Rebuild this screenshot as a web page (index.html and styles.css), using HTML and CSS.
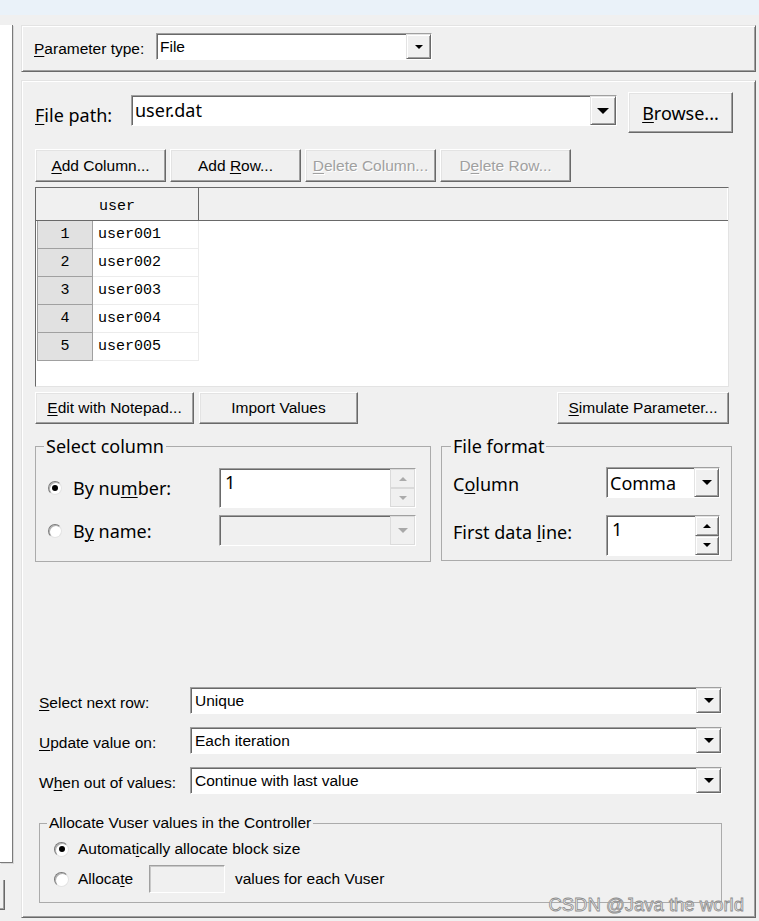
FILE: index.html
```html
<!DOCTYPE html>
<html lang="en">
<head>
<meta charset="utf-8">
<title>Parameter Properties</title>
<link rel="stylesheet" href="styles.css">
</head>
<body>
<div class="titlebar"></div>
<div class="window">
  <aside class="side">
    <div class="tree"></div>
    <div class="side-btn"></div>
  </aside>
  <main class="main">
    <section class="panel top-panel">
      <span class="lbl-type"><u>P</u>arameter type:</span>
      <div class="combo c-type"><span class="val"><span>File</span></span><span class="drop"><i class="tri"></i></span></div>
    </section>

    <section class="panel body-panel">
      <div class="path-row">
        <span class="big lbl-path"><u>F</u>ile path:</span>
        <div class="combo c-path big"><span class="val"><span>user.dat</span></span><span class="drop d-path"><i class="tri t-lg"></i></span></div>
        <button class="btn big browse"><span><u>B</u>rowse...</span></button>
      </div>

      <div class="btn-row">
        <button class="btn b-grid"><span><u>A</u>dd Column...</span></button>
        <button class="btn b-grid"><span>Add <u>R</u>ow...</span></button>
        <button class="btn b-grid dis"><span><u>D</u>elete Column...</span></button>
        <button class="btn b-grid dis"><span>D<u>e</u>lete Row...</span></button>
      </div>

      <div class="grid">
        <div class="ghead"><div class="hcell">user</div><div class="gfill"></div></div>
        <div class="grow"><div class="num">1</div><div class="cell">user001</div></div>
        <div class="grow"><div class="num">2</div><div class="cell">user002</div></div>
        <div class="grow"><div class="num">3</div><div class="cell">user003</div></div>
        <div class="grow"><div class="num">4</div><div class="cell">user004</div></div>
        <div class="grow"><div class="num">5</div><div class="cell">user005</div></div>
      </div>

      <div class="btn-row2">
        <button class="btn b-edit"><span><u>E</u>dit with Notepad...</span></button>
        <button class="btn b-import"><span>Import Values</span></button>
        <button class="btn b-sim"><span><u>S</u>imulate Parameter...</span></button>
      </div>

      <div class="groups big">
        <div class="group g-sel">
          <div class="legend">Select column</div>
          <div class="srow sr1">
            <span class="radio on"></span>
            <span class="rlabel">By nu<u>m</u>ber:</span>
            <div class="spin spin-num">
              <span class="val">1</span>
              <span class="sbtns"><span class="sbtn flat"><i class="up gray"></i></span><span class="sbtn flat"><i class="dn gray"></i></span></span>
            </div>
          </div>
          <div class="srow sr2">
            <span class="radio"></span>
            <span class="rlabel">B<u>y</u> name:</span>
            <div class="combo c-name"><span class="val"></span><span class="drop flat"><i class="tri gray"></i></span></div>
          </div>
        </div>

        <div class="group g-fmt">
          <div class="legend">File format</div>
          <div class="frow fr1">
            <span class="flabel">C<u>o</u>lumn</span>
            <div class="combo c-comma"><span class="val"><span>Comma</span></span><span class="drop"><i class="tri t-md"></i></span></div>
          </div>
          <div class="frow fr2">
            <span class="flabel">First data <u>l</u>ine:</span>
            <div class="spin spin-line">
              <span class="val">1</span>
              <span class="sbtns"><span class="sbtn"><i class="up"></i></span><span class="sbtn"><i class="dn"></i></span></span>
            </div>
          </div>
        </div>
      </div>

      <div class="lrow lr1">
        <span class="llabel"><u>S</u>elect next row:</span>
        <div class="combo c-low"><span class="val"><span>Unique</span></span><span class="drop"><i class="tri t-md"></i></span></div>
      </div>
      <div class="lrow">
        <span class="llabel"><u>U</u>pdate value on:</span>
        <div class="combo c-low"><span class="val"><span>Each iteration</span></span><span class="drop"><i class="tri t-md"></i></span></div>
      </div>
      <div class="lrow">
        <span class="llabel">W<u>h</u>en out of values:</span>
        <div class="combo c-low"><span class="val"><span>Continue with last value</span></span><span class="drop"><i class="tri t-md"></i></span></div>
      </div>

      <div class="group g-alloc">
        <div class="legend legend-s">Allocate Vuser values in the Controller</div>
        <div class="arow ar1">
          <span class="radio on"></span>
          <span class="alabel">Automat<u>i</u>cally allocate block size</span>
        </div>
        <div class="arow ar2">
          <span class="radio"></span>
          <span class="alabel alloc-lbl">Alloca<u>t</u>e</span>
          <span class="alloc-in"></span>
          <span class="after">values for each Vuser</span>
        </div>
      </div>

      <div class="wm">CSDN @Java the world</div>
    </section>
  </main>
</div>
</body>
</html>
```

FILE: styles.css
```css
* { box-sizing: border-box; }
html, body { margin: 0; padding: 0; }
body {
  width: 759px;
  height: 921px;
  overflow: hidden;
  background: #f0f0f0;
  font-family: "Liberation Sans", Arial, sans-serif;
  font-size: 15.5px;
  color: #000;
}
.big { font-family: "Noto Sans", "Liberation Sans", sans-serif; font-size: 18px; }
u { text-decoration: underline; text-underline-offset: 2px; text-decoration-thickness: 1px; }

.titlebar { height: 15px; background: #eaf2f9; }
.window { display: flex; padding-top: 10px; }

.side { width: 13px; display: flex; flex-direction: column; }
.tree {
  height: 838px;
  background: #fff;
  border-right: 1px solid #7a7a7a;
  border-bottom: 1px solid #7a7a7a;
  box-shadow: 1px 1px 0 #d8d8d8;
}
.side-btn {
  margin-top: 17px;
  width: 5px;
  height: 30px;
  border-right: 1px solid #696969;
  border-bottom: 1px solid #696969;
  box-shadow: inset -1px -1px #a0a0a0;
}

.main { margin-left: 8px; width: 735px; display: flex; flex-direction: column; gap: 8px; }
.panel {
  border: 1px solid;
  border-color: #e3e3e3 #696969 #696969 #e3e3e3;
  box-shadow: inset 1px 1px #fff, inset -1px -1px #a0a0a0;
}
.top-panel { height: 47px; display: flex; align-items: flex-start; padding: 7px 0 0 12px; }
.lbl-type { width: 122px; line-height: 28px; padding-top: 2px; }

.body-panel {
  position: relative;
  height: 838px;
  padding: 11px 0 0 13px;
  display: flex;
  flex-direction: column;
  align-items: flex-start;
}

/* combo boxes */
.combo {
  display: flex;
  align-items: stretch;
  background: #fff;
  border: 1px solid;
  border-color: #a0a0a0 #fff #fff #a0a0a0;
  box-shadow: inset 1px 1px #696969;
}
.combo .val { flex: 1; display: flex; align-items: center; white-space: nowrap; overflow: hidden; padding-left: 3px; }
.drop {
  width: 25px;
  flex: none;
  display: flex;
  align-items: center;
  justify-content: center;
  background: #f0f0f0;
  border: 1px solid;
  border-color: #e3e3e3 #696969 #696969 #e3e3e3;
  box-shadow: inset 1px 1px #fff, inset -1px -1px #a0a0a0;
}
.drop.flat { border-color: #dcdcdc; box-shadow: none; }
.d-path { width: 26px; }
.tri {
  display: block;
  width: 0;
  height: 0;
  border-left: 4px solid transparent;
  border-right: 4px solid transparent;
  border-top: 4px solid #000;
}
.t-md { border-left-width: 5px; border-right-width: 5px; border-top-width: 5px; }
.t-lg { border-left-width: 6px; border-right-width: 6px; border-top-width: 6px; }
.tri.gray { border-top-color: #a8a8a8; border-left-width: 5px; border-right-width: 5px; border-top-width: 5px; }

.c-type { width: 276px; height: 27px; }
.c-type .val { padding-left: 3px; }
.c-path { width: 486px; height: 31px; margin-top: 3px; }
.c-path .val { padding-bottom: 2px; }
.c-name { width: 197px; height: 31px; background: #f0f0f0; }
.c-comma { width: 114px; height: 31px; }
.c-low { width: 532px; height: 27px; }
.c-low .val { padding-left: 4px; }

/* buttons */
.btn {
  font: inherit;
  color: #000;
  background: #f0f0f0;
  margin: 0;
  padding: 0;
  border: 1px solid;
  border-color: #fff #696969 #696969 #fff;
  box-shadow: inset -1px -1px #a0a0a0, inset 1px 1px #e3e3e3;
  display: flex;
  align-items: center;
  justify-content: center;
  white-space: nowrap;
}
.btn.big { font-family: "Noto Sans", "Liberation Sans", sans-serif; font-size: 18px; }
.btn.dis { color: #a0a0a0; text-shadow: 1px 1px #fff; }

.path-row { display: flex; align-items: flex-start; height: 41px; }
.lbl-path { width: 96px; line-height: 24px; margin-top: 11px; }
.browse { width: 105px; height: 41px; margin-left: 11px; }

.btn-row { display: flex; gap: 4px; margin-top: 16px; }
.b-grid { width: 131px; height: 33px; }

/* grid */
.grid {
  margin-top: 5px;
  width: 694px;
  height: 200px;
  background: #fff;
  border: 1px solid;
  border-color: #696969 #e3e3e3 #e3e3e3 #696969;
  font-family: "Liberation Mono", monospace;
  font-size: 15px;
}
.ghead { display: flex; height: 33px; background: #f0f0f0; border-bottom: 1px solid #696969; }
.hcell { width: 163px; border-right: 1px solid #696969; display: flex; align-items: center; justify-content: center; padding-top: 4px; }
.gfill { flex: 1; border-right: 1px solid #fff; }
.grow { display: flex; height: 28px; margin-left: 1px; }
.num {
  width: 56px;
  background: #e1e1e1;
  border: 1px solid #a0a0a0;
  border-top: 0;
  display: flex;
  align-items: center;
  justify-content: center;
}
.cell {
  width: 106px;
  border-right: 1px solid #ececec;
  border-bottom: 1px solid #ececec;
  padding-left: 5px;
  display: flex;
  align-items: center;
}

.btn-row2 { display: flex; width: 694px; margin-top: 5px; }
.b-edit { width: 159px; height: 32px; }
.b-import { width: 159px; height: 32px; margin-left: 5px; }
.b-sim { width: 172px; height: 32px; margin-left: auto; }

/* group boxes */
.groups { display: flex; gap: 10px; align-items: flex-start; margin-top: 22px; }
.group { border: 1px solid #ababab; }
.legend {
  display: table;
  margin: -11px 0 0 8px;
  padding: 0 2px;
  background: #f0f0f0;
  line-height: 20px;
}
.g-sel { width: 396px; height: 116px; }
.g-fmt { width: 291px; height: 115px; }
.g-fmt .legend { margin-left: 9px; }

.srow { display: flex; align-items: center; padding-left: 12px; }
.sr1 { margin-top: 12px; height: 40px; }
.sr2 { margin-top: 7px; height: 31px; }
.rlabel { margin-left: 11px; width: 146px; }

.radio {
  flex: none;
  width: 14px;
  height: 14px;
  border-radius: 50%;
  background: #fff;
  border: 1px solid;
  border-color: #7a7a7a #e3e3e3 #e3e3e3 #7a7a7a;
  box-shadow: inset 1px 1px #b0b0b0;
  display: flex;
  align-items: center;
  justify-content: center;
}
.radio.on::after { content: ""; width: 6px; height: 6px; border-radius: 50%; background: #000; }

.spin {
  display: flex;
  background: #fff;
  border: 1px solid;
  border-color: #a0a0a0 #fff #fff #a0a0a0;
  box-shadow: inset 1px 1px #696969;
}
.spin .val { flex: 1; padding: 1px 0 0 5px; line-height: 24px; }
.spin-num { width: 197px; height: 40px; }
.spin-line { width: 114px; height: 41px; }
.sbtns { width: 25px; flex: none; display: flex; flex-direction: column; }
.spin-line .sbtns { width: 24px; }
.sbtn {
  flex: 1;
  display: flex;
  align-items: center;
  justify-content: center;
  background: #f0f0f0;
  border: 1px solid;
  border-color: #e3e3e3 #696969 #696969 #e3e3e3;
  box-shadow: inset 1px 1px #fff, inset -1px -1px #a0a0a0;
}
.sbtn.flat { border-color: #dadada; box-shadow: none; }
.up, .dn { display: block; width: 0; height: 0; border-left: 4px solid transparent; border-right: 4px solid transparent; }
.up { border-bottom: 4px solid #000; }
.dn { border-top: 4px solid #000; }
.up.gray { border-bottom-color: #ababab; }
.dn.gray { border-top-color: #ababab; }

.frow { display: flex; align-items: center; padding-left: 11px; }
.fr1 { margin-top: 11px; height: 31px; }
.fr2 { margin-top: 17px; height: 41px; }
.flabel { width: 153px; }
.fr1 .flabel { padding-top: 3px; }
.fr2 .flabel { padding-bottom: 8px; }

/* lower section */
.lrow { display: flex; align-items: center; padding-left: 4px; margin-top: 13px; }
.lr1 { margin-top: 125px; }
.llabel { width: 151px; padding-top: 5px; }

.g-alloc { margin: 29px 0 0 4px; width: 683px; height: 80px; }
.legend-s { margin: -10px 0 0 7px; line-height: 18px; }
.arow { display: flex; align-items: center; padding-left: 14px; }
.ar1 { margin-top: 7px; height: 20px; }
.ar2 { margin-top: 6px; height: 28px; }
.arow .radio { width: 15px; height: 15px; }
.alabel { margin-left: 9px; }
.alloc-lbl { width: 71px; }
.alloc-in {
  width: 76px;
  height: 28px;
  background: #f0f0f0;
  border: 1px solid;
  border-color: #a0a0a0 #fff #fff #a0a0a0;
  box-shadow: inset 1px 1px #c8c8c8;
}
.after { margin-left: 10px; }

.wm {
  position: absolute;
  right: 11px;
  bottom: 2px;
  font-family: "Liberation Sans", Arial, sans-serif;
  font-size: 18.5px;
  line-height: 20px;
  color: #f2f2f2;
  -webkit-text-stroke: 0.8px #8c8c8c;
  pointer-events: none;
  white-space: nowrap;
}
```
